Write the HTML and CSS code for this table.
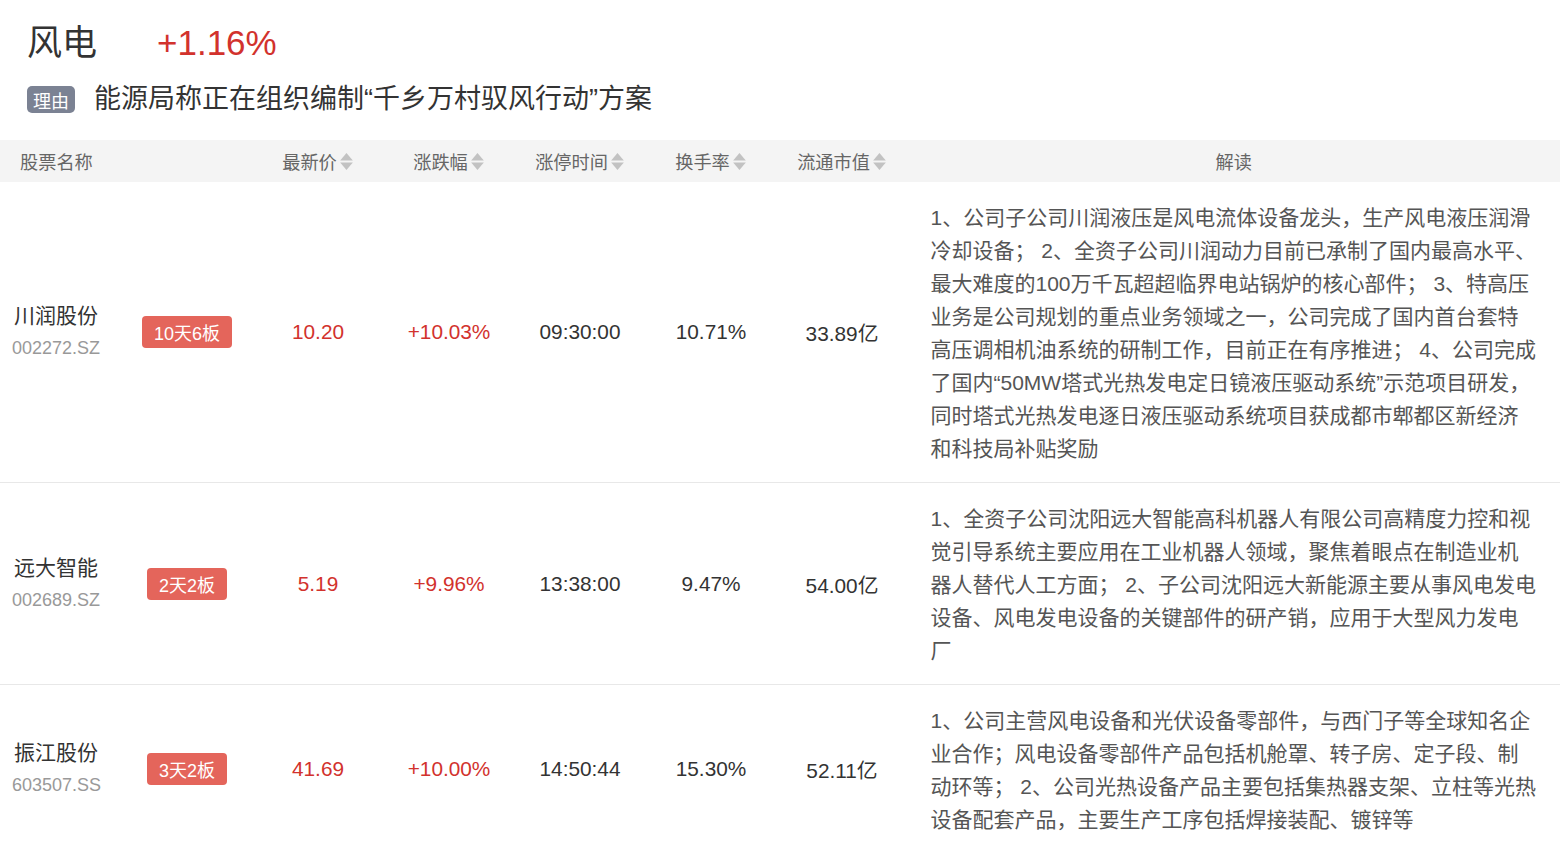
FILE: index.html
```html
<!DOCTYPE html>
<html lang="zh">
<head>
<meta charset="utf-8">
<title>风电</title>
<link rel="stylesheet" href="styles.css">
</head>
<body>
<div class="page">
  <div class="head">
    <div class="title-row">
      <span class="title">风电</span>
      <span class="pct">+1.16%</span>
    </div>
    <div class="reason-row">
      <span class="reason-tag">理由</span>
      <span class="reason">能源局称正在组织编制“千乡万村驭风行动”方案</span>
    </div>
  </div>

  <table class="tbl">
    <colgroup>
      <col class="c-name"><col class="c-num"><col class="c-num"><col class="c-num"><col class="c-num"><col class="c-num"><col class="c-num"><col class="c-desc">
    </colgroup>
    <thead>
      <tr>
        <th class="th-name" colspan="2">股票名称</th>
        <th><span class="sort">最新价<svg class="arr" viewBox="0 0 14 18"><path d="M7 1 L13 8 L1 8 Z"/><path d="M1 10 L13 10 L7 17 Z"/></svg></span></th>
        <th><span class="sort">涨跌幅<svg class="arr" viewBox="0 0 14 18"><path d="M7 1 L13 8 L1 8 Z"/><path d="M1 10 L13 10 L7 17 Z"/></svg></span></th>
        <th><span class="sort">涨停时间<svg class="arr" viewBox="0 0 14 18"><path d="M7 1 L13 8 L1 8 Z"/><path d="M1 10 L13 10 L7 17 Z"/></svg></span></th>
        <th><span class="sort">换手率<svg class="arr" viewBox="0 0 14 18"><path d="M7 1 L13 8 L1 8 Z"/><path d="M1 10 L13 10 L7 17 Z"/></svg></span></th>
        <th><span class="sort">流通市值<svg class="arr" viewBox="0 0 14 18"><path d="M7 1 L13 8 L1 8 Z"/><path d="M1 10 L13 10 L7 17 Z"/></svg></span></th>
        <th>解读</th>
      </tr>
    </thead>
    <tbody>
      <tr>
        <td class="name"><div class="sname">川润股份</div><div class="code">002272.SZ</div></td>
        <td><span class="badge">10天6板</span></td>
        <td class="up">10.20</td>
        <td class="up">+10.03%</td>
        <td>09:30:00</td>
        <td>10.71%</td>
        <td>33.89亿</td>
        <td class="desc">1、公司子公司川润液压是风电流体设备龙头，生产风电液压润滑冷却设备； 2、全资子公司川润动力目前已承制了国内最高水平、最大难度的100万千瓦超超临界电站锅炉的核心部件； 3、特高压业务是公司规划的重点业务领域之一，公司完成了国内首台套特高压调相机油系统的研制工作，目前正在有序推进； 4、公司完成了国内“50MW塔式光热发电定日镜液压驱动系统”示范项目研发，同时塔式光热发电逐日液压驱动系统项目获成都市郫都区新经济和科技局补贴奖励</td>
      </tr>
      <tr>
        <td class="name"><div class="sname">远大智能</div><div class="code">002689.SZ</div></td>
        <td><span class="badge">2天2板</span></td>
        <td class="up">5.19</td>
        <td class="up">+9.96%</td>
        <td>13:38:00</td>
        <td>9.47%</td>
        <td>54.00亿</td>
        <td class="desc">1、全资子公司沈阳远大智能高科机器人有限公司高精度力控和视觉引导系统主要应用在工业机器人领域，聚焦着眼点在制造业机器人替代人工方面； 2、子公司沈阳远大新能源主要从事风电发电设备、风电发电设备的关键部件的研产销，应用于大型风力发电厂</td>
      </tr>
      <tr>
        <td class="name"><div class="sname">振江股份</div><div class="code">603507.SS</div></td>
        <td><span class="badge">3天2板</span></td>
        <td class="up">41.69</td>
        <td class="up">+10.00%</td>
        <td>14:50:44</td>
        <td>15.30%</td>
        <td>52.11亿</td>
        <td class="desc">1、公司主营风电设备和光伏设备零部件，与西门子等全球知名企业合作；风电设备零部件产品包括机舱罩、转子房、定子段、制动环等； 2、公司光热设备产品主要包括集热器支架、立柱等光热设备配套产品，主要生产工序包括焊接装配、镀锌等</td>
      </tr>
    </tbody>
  </table>
</div>
</body>
</html>
```

FILE: styles.css
```css
* { box-sizing: border-box; }
html, body { margin: 0; padding: 0; background: #fff; }
body {
  font-family: "Liberation Sans", "Noto Sans CJK SC", sans-serif;
  color: #333;
}
.page { width: 1560px; }

.head { padding: 18px 27px 27px; }
.title-row { display: flex; align-items: center; height: 50px; gap: 60px; }
.title { font-size: 35px; color: #333; line-height: 50px; }
.pct { font-size: 35px; color: #d2322d; line-height: 50px; }

.reason-row { display: flex; align-items: center; margin-top: 18px; height: 27px; gap: 19px; }
.reason-tag {
  display: inline-flex; align-items: center; justify-content: center;
  width: 48px; height: 27px; border-radius: 5px;
  background: #7b8293; color: #fff; font-size: 18px;
}
.reason { font-size: 27px; color: #333; line-height: 27px; }

.tbl { border-collapse: collapse; table-layout: fixed; width: 1560px; }
.c-name { width: 121.5px; }
.c-num { width: 131px; }
.c-desc { width: auto; }

.tbl th {
  background: #f4f4f4; height: 42px; padding: 0;
  font-weight: normal; font-size: 18.2px; color: #666;
  text-align: center; vertical-align: middle;
}
.tbl th.th-name { text-align: left; padding-left: 20px; }
.sort { display: inline-flex; align-items: center; gap: 2px; }
.arr { width: 15px; height: 19px; fill: #c2c2c2; }

.tbl td {
  padding: 0; text-align: center; vertical-align: middle;
  font-size: 20.8px; color: #333;
  border-bottom: 1px solid #e8e8e8;
}
.tbl tbody tr:last-child td { border-bottom: none; }
.tbl td.up { color: #d2322d; }
.tbl td.name { text-align: left; padding-left: 12px; }
.sname { font-size: 21px; color: #333; line-height: 32px; padding-left: 2px; }
.code { font-size: 18px; color: #999; line-height: 32px; }

.badge {
  display: inline-flex; align-items: center; height: 32px;
  padding: 0 12px; border-radius: 4px;
  background: #e4655b; color: #fff; font-size: 18px;
}

.tbl td.desc {
  text-align: left; vertical-align: top;
  padding: 19px 22px 17px 23px;
  font-size: 21px; line-height: 33px; color: #555;
}
```
